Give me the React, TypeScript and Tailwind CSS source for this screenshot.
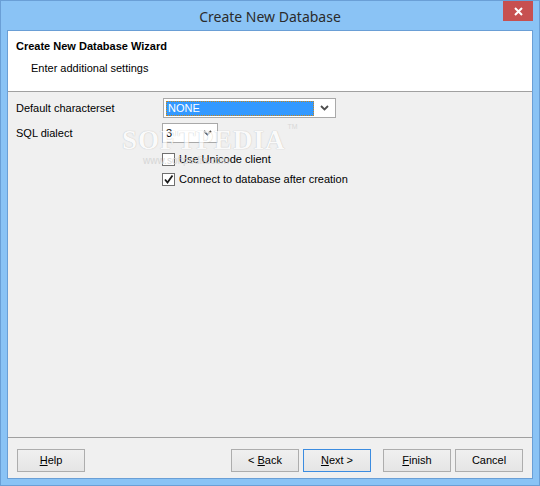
import React from 'react'

const ui = { fontFamily: '"Liberation Sans", Tahoma, Arial, sans-serif' }

function Chevron() {
  return (
    <svg width="9" height="6" viewBox="0 0 9 6" className="shrink-0">
      <polyline points="1,1 4.5,4.5 8,1" fill="none" stroke="#4d4d4d" strokeWidth="1.8" />
    </svg>
  )
}

function Check() {
  return (
    <svg width="11" height="11" viewBox="0 0 11 11">
      <polyline points="2,5.5 4.5,8.5 9.5,1.5" fill="none" stroke="#1a1a1a" strokeWidth="1.8" />
    </svg>
  )
}

function Button({ children, primary }: { children: React.ReactNode; primary?: boolean }) {
  return (
    <button
      className={`w-[68px] h-[23px] flex items-center justify-center text-[11px] text-black bg-gradient-to-b from-[#f0f0f0] to-[#e5e5e5] border ${
        primary ? 'border-[#3c8ce0]' : 'border-[#adadad]'
      }`}
    >
      {children}
    </button>
  )
}

function CheckRow({ checked, label }: { checked?: boolean; label: string }) {
  return (
    <div className="h-[20px] flex items-center pl-[154px]">
      <div className="w-[13px] h-[13px] border border-[#707070] bg-white flex items-center justify-center">
        {checked && <Check />}
      </div>
      <span className="ml-[4px] text-[11px] text-black">{label}</span>
    </div>
  )
}

export default function App() {
  return (
    <div
      className="w-[540px] h-[486px] bg-[#8ac3f5] border border-[#6a9fd6] flex flex-col overflow-hidden"
      style={ui}
    >
      <div className="h-[29px] shrink-0 relative flex items-center justify-center">
        <span
          className="text-[14px] text-[#2b2b2b] mt-[2px]"
          style={{ fontFamily: '"Noto Sans", "Open Sans", sans-serif' }}
        >
          Create New Database
        </span>
        <div className="absolute top-0 right-[6px] w-[30px] h-[20px] bg-[#c75050] flex items-center justify-center">
          <svg width="9" height="9" viewBox="0 0 9 9">
            <path d="M1 1 L8 8 M8 1 L1 8" stroke="#fff" strokeWidth="2" />
          </svg>
        </div>
      </div>

      <div className="mx-[6px] h-[449px] border border-[#6a9fd6] bg-[#f0f0f0] flex flex-col relative">
        <div className="h-[60px] bg-white shrink-0 pl-[8px] pt-[9px]">
          <div className="text-[11px] font-bold text-black leading-[13px]">Create New Database Wizard</div>
          <div className="text-[11px] text-black leading-[13px] mt-[9px] pl-[15px]">Enter additional settings</div>
        </div>
        <div className="h-px bg-[#a0a0a0] shrink-0" />

        <div className="flex-1 pt-[6px] pl-[8px] relative">
          <div className="flex items-center h-[20px]">
            <span className="w-[147px] text-[11px] text-black">Default characterset</span>
            <div className="w-[173px] h-[20px] border border-[#a9a9a9] bg-white flex items-center pl-[2px] pr-[6px]">
              <div className="flex-1 h-[15px] bg-[#3399ff] border border-dotted border-[#c8861a] flex items-center pl-[1px]">
                <span className="text-[11px] text-white leading-none">NONE</span>
              </div>
              <div className="w-[15px] flex justify-end">
                <Chevron />
              </div>
            </div>
          </div>

          <div className="flex items-center h-[20px] mt-[5px]">
            <span className="w-[146px] text-[11px] text-black">SQL dialect</span>
            <div className="w-[56px] h-[20px] border border-[#a9a9a9] bg-white flex items-center pl-[3px] pr-[5px]">
              <span className="flex-1 text-[11px] text-black">3</span>
              <Chevron />
            </div>
          </div>

          <div className="mt-[6px] -ml-[8px]">
            <CheckRow label="Use Unicode client" />
            <CheckRow checked label="Connect to database after creation" />
          </div>

          <div className="absolute left-[114px] top-[28px] pointer-events-none select-none">
            <span
              className="text-[27px] font-bold tracking-[1px] text-white opacity-70 [text-shadow:0_0_1px_#9a9a9a]"
              style={{ fontFamily: '"Liberation Serif", serif' }}
            >
              SOFTPEDIA
            </span>
            <span className="absolute -right-[12px] top-[2px] text-[7px] text-[#d8d8d8]">TM</span>
          </div>
          <div className="absolute left-[135px] top-[61px] text-[10px] text-[#d0d0d0] opacity-80 pointer-events-none select-none">
            www.softpedia.com
          </div>
        </div>

        <div className="h-px bg-[#a0a0a0] shrink-0" />
        <div className="h-[40px] shrink-0 flex items-start pt-[11px] pl-[9px] pr-[9px]">
          <Button>
            <span><u>H</u>elp</span>
          </Button>
          <div className="flex-1" />
          <div className="flex gap-[4px]">
            <Button>
              <span>&lt; <u>B</u>ack</span>
            </Button>
            <Button primary>
              <span><u>N</u>ext &gt;</span>
            </Button>
          </div>
          <div className="flex gap-[4px] ml-[12px]">
            <Button>
              <span><u>F</u>inish</span>
            </Button>
            <Button>
              <span>Cancel</span>
            </Button>
          </div>
        </div>
      </div>
    </div>
  )
}
